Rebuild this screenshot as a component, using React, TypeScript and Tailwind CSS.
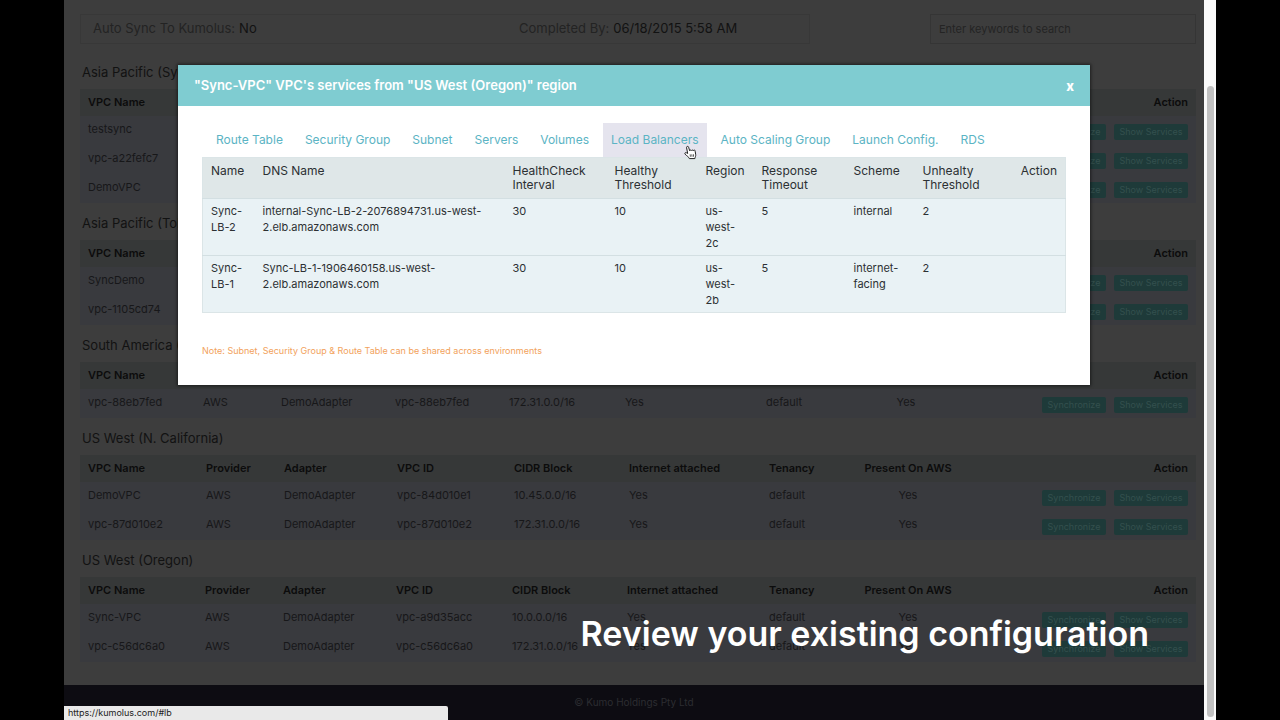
type Vpc = {
  name: string;
  cidr: string;
};

type Region = {
  title: string;
  columns: string[];
  vpcs: Vpc[];
};

const wideColumns = ["w-[118px]", "w-[78px]", "w-[113px]", "w-[117px]", "w-[115px]", "w-[140px]", "w-[63px]", "w-[168px]", ""];
const middleColumns = ["w-[117px]", "w-[78px]", "w-[113px]", "w-[116px]", "w-[115px]", "w-[142px]", "w-[63px]", "w-[168px]", ""];
const narrowColumns = ["w-[115px]", "w-[78px]", "w-[114px]", "w-[114px]", "w-[116px]", "w-[141px]", "w-[64px]", "w-[168px]", ""];

const headings = ["VPC Name", "Provider", "Adapter", "VPC ID", "CIDR Block", "Internet attached", "Tenancy", "Present On AWS", "Action"];

const regions: Region[] = [
  {
    title: "Asia Pacific (Sydney)",
    columns: wideColumns,
    vpcs: [
      { name: "testsync", cidr: "10.0.0.0/16" },
      { name: "vpc-a22fefc7", cidr: "172.31.0.0/16" },
      { name: "DemoVPC", cidr: "10.0.0.0/16" },
    ],
  },
  {
    title: "Asia Pacific (Tokyo)",
    columns: wideColumns,
    vpcs: [
      { name: "SyncDemo", cidr: "10.0.0.0/16" },
      { name: "vpc-1105cd74", cidr: "172.31.0.0/16" },
    ],
  },
  {
    title: "South America (Sao Paulo)",
    columns: narrowColumns,
    vpcs: [{ name: "vpc-88eb7fed", cidr: "172.31.0.0/16" }],
  },
  {
    title: "US West (N. California)",
    columns: wideColumns,
    vpcs: [
      { name: "DemoVPC", cidr: "10.45.0.0/16" },
      { name: "vpc-87d010e2", cidr: "172.31.0.0/16" },
    ],
  },
  {
    title: "US West (Oregon)",
    columns: middleColumns,
    vpcs: [
      { name: "Sync-VPC", cidr: "10.0.0.0/16" },
      { name: "vpc-c56dc6a0", cidr: "172.31.0.0/16" },
    ],
  },
];

const vpcIds: Record<string, string> = {
  "DemoVPC": "vpc-84d010e1",
  "Sync-VPC": "vpc-a9d35acc",
};

const tabs = ["Route Table", "Security Group", "Subnet", "Servers", "Volumes", "Load Balancers", "Auto Scaling Group", "Launch Config.", "RDS"];

const balancerColumns = [
  { label: "Name", width: "w-[52px]" },
  { label: "DNS Name", width: "w-[250px]" },
  { label: "HealthCheck Interval", width: "w-[102px]" },
  { label: "Healthy Threshold", width: "w-[91px]" },
  { label: "Region", width: "w-[56px]" },
  { label: "Response Timeout", width: "w-[92px]" },
  { label: "Scheme", width: "w-[69px]" },
  { label: "Unhealty Threshold", width: "w-[84px]" },
  { label: "Action", width: "" },
];

const balancers = [
  ["Sync-LB-2", "internal-Sync-LB-2-2076894731.us-west-2.elb.amazonaws.com", "30", "10", "us-west-2c", "5", "internal", "2", ""],
  ["Sync-LB-1", "Sync-LB-1-1906460158.us-west-2.elb.amazonaws.com", "30", "10", "us-west-2b", "5", "internet-facing", "2", ""],
];

function RegionSection({ region }: { region: Region }) {
  return (
    <section className="pb-2">
      <h2 className="mb-1 pl-0.5 text-[13px] leading-[25px] text-[#121212]">{region.title}</h2>
      <table className="w-full table-fixed text-left text-[11px]">
        <colgroup>
          {region.columns.map((width, i) => (
            <col key={i} className={width} />
          ))}
        </colgroup>
        <thead className="bg-[#363838] text-[#0c0c0c]">
          <tr className="h-[27px]">
            {headings.map((label, i) => (
              <th
                key={label}
                className={`px-2 font-semibold whitespace-nowrap ${i === 7 ? "text-center" : ""} ${i === 8 ? "text-right" : ""}`}
              >
                {label}
              </th>
            ))}
          </tr>
        </thead>
        <tbody className="bg-[#393a3e] text-[#171719]">
          {region.vpcs.map((vpc) => (
            <tr key={vpc.name} className="h-[29px] align-top leading-[18px]">
              <td className="px-2 pt-1">{vpc.name}</td>
              <td className="px-2 pt-1">AWS</td>
              <td className="px-2 pt-1">DemoAdapter</td>
              <td className="px-2 pt-1">{vpcIds[vpc.name] ?? vpc.name}</td>
              <td className="px-2 pt-1">{vpc.cidr}</td>
              <td className="px-2 pt-1">Yes</td>
              <td className="px-2 pt-1">default</td>
              <td className="px-2 pt-1 text-center">Yes</td>
              <td className="px-2 pt-2">
                <div className="flex justify-end gap-2 text-[9px] leading-4 text-[#34504e]">
                  <button type="button" className="h-4 w-16 rounded-xs bg-[#1e3a39]">Synchronize</button>
                  <button type="button" className="h-4 w-[74px] rounded-xs bg-[#1e3a39]">Show Services</button>
                </div>
              </td>
            </tr>
          ))}
        </tbody>
      </table>
    </section>
  );
}

function HandCursor() {
  return (
    <svg viewBox="0 0 16 18" className="pointer-events-none absolute top-[22px] right-2.5 h-[15px] w-3.5" aria-hidden="true">
      <path
        d="M5.200 10.200 3.900 3.200a1.200 1.200 0 0 1 2.400-.6l1.300 4.300a1.200 1.200 0 0 1 2.200-.2 1.200 1.200 0 0 1 2.200.3 1.100 1.100 0 0 1 2.200.5l.6 3.600c.4 2.500-.7 3.200-.9 5.200H7.200c-.4-2-3-3-5.100-5.300-1-1.400.7-2.500 1.800-1.600z"
        fill="#fff"
        stroke="#222"
        strokeWidth="1.2"
        strokeLinejoin="round"
      />
      <path d="M8.200 11.200l.3 2.900M10.200 11.200l.2 2.900M12.200 11.200l.1 2.900" stroke="#222" strokeWidth=".9" />
    </svg>
  );
}

function ServicesDialog() {
  return (
    <div
      role="dialog"
      aria-labelledby="dialog-title"
      className="absolute inset-x-0 top-[65px] mx-auto w-4/5 bg-white shadow-[0_0_3px_1px_rgba(0,0,0,0.5)]"
    >
      <header className="flex h-[41px] items-center justify-between bg-[#7fccd1] px-4 text-white">
        <h1 id="dialog-title" className="text-[13px] font-semibold">
          "Sync-VPC" VPC's services from "US West (Oregon)" region
        </h1>
        <button type="button" aria-label="Close" className="w-2 text-[13px] leading-4 font-extrabold">x</button>
      </header>
      <div className="px-6 pt-[17px] pb-7">
        <nav className="flex gap-1.5 pl-1.5 text-[12px] leading-[34px] text-[#5bb4c4]">
          {tabs.map((tab) => (
            <a
              key={tab}
              href="#lb"
              className={`relative px-2 whitespace-nowrap ${tab === "Load Balancers" ? "bg-[#e5e4ee]" : ""}`}
            >
              {tab}
              {tab === "Load Balancers" && <HandCursor />}
            </a>
          ))}
        </nav>
        <table className="w-full table-fixed border border-[#dbe5e7] text-left text-[11px] leading-4 text-[#2c3033]">
          <colgroup>
            {balancerColumns.map((column) => (
              <col key={column.label} className={column.width} />
            ))}
          </colgroup>
          <thead className="bg-[#dfe7e8] text-[12px] leading-[14px]">
            <tr className="h-[41px] align-top">
              {balancerColumns.map((column) => (
                <th key={column.label} className={`px-2 pt-1.5 font-normal ${column.label === "Action" ? "text-right" : ""}`}>
                  {column.label}
                </th>
              ))}
            </tr>
          </thead>
          <tbody className="bg-[#e9f2f5]">
            {balancers.map((row) => (
              <tr key={row[0]} className="h-[57px] border-t border-[#d3dfe2] align-top">
                {row.map((value, i) => (
                  <td key={i} className="px-2 pt-1 wrap-break-word">{value}</td>
                ))}
              </tr>
            ))}
          </tbody>
        </table>
        <p className="mt-8 text-[9px] leading-3 text-[#f2a25c]">
          Note: Subnet, Security Group &amp; Route Table can be shared across environments
        </p>
      </div>
    </div>
  );
}

export default function App() {
  return (
    <div className="flex h-screen overflow-hidden bg-black px-16 font-['Inter',sans-serif]">
      <div className="relative flex min-w-0 flex-1 flex-col bg-[#3d3d3d]">
        <main className="flex-1 pt-3.5 pr-2 pl-4">
          <div className="mb-4 flex h-[30px] justify-between text-[13px]">
            <dl className="flex w-[730px] items-center border border-[#383838] px-3 text-[#121212]">
              <div className="flex flex-1 gap-1">
                <dt className="text-[#232323]">Auto Sync To Kumolus:</dt>
                <dd>No</dd>
              </div>
              <div className="flex w-[278px] gap-1">
                <dt className="text-[#232323]">Completed By:</dt>
                <dd>06/18/2015 5:58 AM</dd>
              </div>
            </dl>
            <input
              type="search"
              aria-label="Search"
              placeholder="Enter keywords to search"
              className="w-[266px] border border-[#353535] px-2 text-[11px] placeholder:text-[#242424]"
            />
          </div>
          {regions.map((region) => (
            <RegionSection key={region.title} region={region} />
          ))}
        </main>
        <footer className="flex h-[35px] shrink-0 items-center justify-center bg-[#0d0c12] text-[10px] text-[#2c2c31]">
          © Kumo Holdings Pty Ltd
        </footer>
        <ServicesDialog />
        <p className="absolute right-[55px] bottom-[66px] text-[34px] leading-10 font-semibold whitespace-nowrap text-white">
          Review your existing configuration
        </p>
        <div className="absolute bottom-0 left-0 h-3.5 w-96 rounded-tr-xs bg-[#e9e9e9] px-1 text-[9px] leading-3.5 text-[#222]">
          https://kumolus.com/#lb
        </div>
      </div>
      <div className="flex w-3 justify-center bg-[#fafafa] pt-[86px] pb-[3px]">
        <div className="w-[7px] rounded-full bg-[#c1c1c1]" />
      </div>
    </div>
  );
}
